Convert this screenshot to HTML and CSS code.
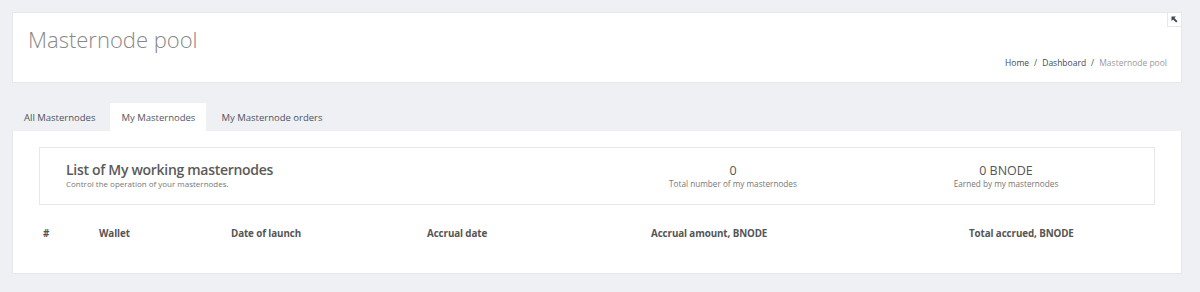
FILE: index.html
```html
<!DOCTYPE html>
<html>
<head>
<meta charset="utf-8">
<link rel="stylesheet" href="styles.css">
</head>
<body>
<div class="page">
  <div class="header-card">
    <h1 class="page-title">Masternode pool</h1>
    <nav class="breadcrumbs">
      <span class="crumb">Home</span><span class="sep">/</span><span class="crumb">Dashboard</span><span class="sep">/</span><span class="crumb current">Masternode pool</span>
    </nav>
    <button class="corner-btn" aria-label="expand">
      <svg width="7" height="7" viewBox="0 0 7 7"><path d="M0.5 0.5h4.5l-1.6 1.6 3.1 3.1-1.3 1.3-3.1-3.1-1.6 1.6z" fill="#3c4550"/></svg>
    </button>
  </div>

  <div class="tabs">
    <div class="tab">All Masternodes</div>
    <div class="tab active">My Masternodes</div>
    <div class="tab">My Masternode orders</div>
  </div>

  <div class="content-card">
    <div class="summary">
      <div class="summary-title">
        <div class="title">List of My working masternodes</div>
        <div class="subtitle">Control the operation of your masternodes.</div>
      </div>
      <div class="stat stat-count">
        <div class="stat-value">0</div>
        <div class="stat-label">Total number of my masternodes</div>
      </div>
      <div class="stat stat-earned">
        <div class="stat-value">0 BNODE</div>
        <div class="stat-label">Earned by my masternodes</div>
      </div>
    </div>

    <div class="table-head">
      <div class="th">#</div>
      <div class="th">Wallet</div>
      <div class="th">Date of launch</div>
      <div class="th">Accrual date</div>
      <div class="th">Accrual amount, BNODE</div>
      <div class="th">Total accrued, BNODE</div>
    </div>
  </div>
</div>
</body>
</html>
```

FILE: styles.css
```css
* { box-sizing: border-box; }
html, body { margin: 0; padding: 0; }
body {
  background: #eff0f4;
  font-family: "Open Sans", "Noto Sans", sans-serif;
  color: #555;
}
.page {
  padding: 12px 18px 0 12px;
}
.header-card {
  position: relative;
  background: #fff;
  border: 1px solid #e6e7ea;
  height: 71px;
  display: flex;
  justify-content: space-between;
  padding: 0 14px 0 15px;
}
.page-title {
  margin: 0;
  font-weight: 300;
  font-size: 22px;
  line-height: 1;
  color: #888;
  padding-top: 15px;
}
.breadcrumbs {
  align-self: flex-end;
  font-size: 8.5px;
  padding-bottom: 14px;
  color: #3f4a5a;
}
.breadcrumbs .sep { margin: 0 5px; color: #555; }
.breadcrumbs .current { color: #9a9a9a; }
.corner-btn {
  position: absolute;
  top: -1px;
  right: -1px;
  width: 15px;
  height: 15px;
  padding: 0;
  border: 1px solid #e6e7ea;
  background: #fff;
  display: flex;
  align-items: center;
  justify-content: center;
}
.tabs {
  display: flex;
  margin-top: 20px;
  height: 28px;
}
.tab {
  font-size: 9.5px;
  color: #4a5463;
  padding: 0 11px 0 12px;
  display: flex;
  align-items: center;
  height: 28px;
}
.tab.active {
  background: #fff;
  color: #4e5866;
  padding: 0 11px;
}
.tab + .tab.active { margin-left: 4px; }
.tab.active + .tab { padding-left: 15px; }
.content-card {
  background: #fff;
  border: 1px solid #e6e7ea;
  border-top: none;
  padding: 16px 26px 0 26px;
  height: 143px;
}
.summary {
  border: 1px solid #e6e7ea;
  height: 58px;
  display: flex;
  align-items: center;
}
.summary-title {
  flex: none;
  padding-left: 26px;
  padding-bottom: 2px;
  width: 569px;
}
.title {
  font-size: 14px;
  font-weight: 600;
  color: #5a5a5a;
  line-height: 18px;
  letter-spacing: -0.3px;
}
.subtitle {
  font-size: 8px;
  color: #777;
  line-height: 10px;
}
.stat {
  flex: none;
  text-align: center;
}
.stat-count { width: 248px; }
.stat-earned { width: 298px; }
.stat-value {
  font-size: 12.5px;
  color: #555;
  line-height: 16px;
  font-weight: 400;
}
.stat-label {
  font-size: 8.2px;
  color: #777;
  line-height: 10px;
}
.table-head {
  display: grid;
  grid-template-columns: 56px 132px 196px 224px 318px 191px;
  margin-top: 22px;
}
.th {
  font-family: "Open Sans", sans-serif;
  font-weight: 700;
  font-size: 9.8px;
  color: #555;
  padding-left: 4px;
  letter-spacing: -0.1px;
}
```
